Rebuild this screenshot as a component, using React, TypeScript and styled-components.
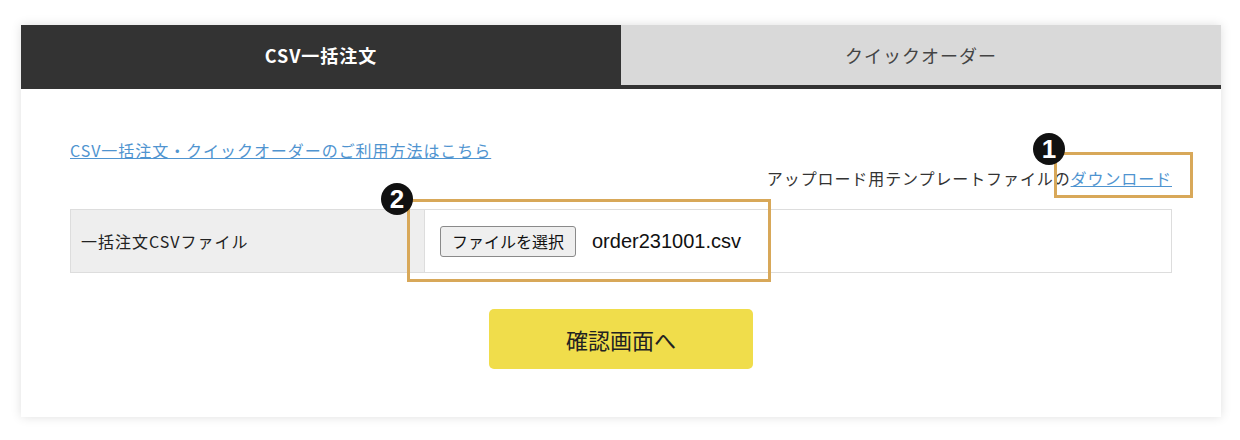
import React from "react";
import styled, { createGlobalStyle } from "styled-components";

const GlobalStyle = createGlobalStyle`
  html, body {
    margin: 0;
    padding: 0;
    background: #ffffff;
  }
  body {
    font-family: "Noto Sans CJK JP", "Noto Sans", sans-serif;
    color: #222222;
  }
`;

const App = () => {
  return (
    <>
      <GlobalStyle />
      <Page>
        <Card>
          <TabBar>
            <Tab $active>CSV一括注文</Tab>
            <Tab>クイックオーダー</Tab>
          </TabBar>
          <Body>
            <HelpLink href="#">CSV一括注文・クイックオーダーのご利用方法はこちら</HelpLink>
            <TemplateRow>
              <TemplateText>
                アップロード用テンプレートファイルの
                <InlineLink href="#">ダウンロード</InlineLink>
              </TemplateText>
              <Highlight $top={-14} $right={-21} $width={139} $height={46} />
              <Badge $top={-33} $right={107}>1</Badge>
            </TemplateRow>
            <FileTable>
              <LabelCell>一括注文CSVファイル</LabelCell>
              <ValueCell>
                <ChooseButton type="button">ファイルを選択</ChooseButton>
                <FileName>order231001.csv</FileName>
              </ValueCell>
              <Highlight $top={-11} $left={336} $width={364} $height={83} />
              <Badge $top={-27} $left={310}>2</Badge>
            </FileTable>
            <Actions>
              <ConfirmButton type="button">確認画面へ</ConfirmButton>
            </Actions>
          </Body>
        </Card>
      </Page>
    </>
  );
};

export default App;

const Page = styled.div`
  width: 1240px;
  height: 440px;
  padding: 25px 0 0 21px;
  box-sizing: border-box;
`;

const Card = styled.div`
  width: 1200px;
  background: #ffffff;
  box-shadow: 0 0 10px rgba(0, 0, 0, 0.13);
`;

const TabBar = styled.div`
  display: flex;
  border-bottom: 4px solid #333333;
`;

const Tab = styled.div<{ $active?: boolean }>`
  flex: 1;
  height: 60px;
  display: flex;
  align-items: center;
  justify-content: center;
  font-size: 18px;
  letter-spacing: 1px;
  font-weight: ${(p) => (p.$active ? 700 : 400)};
  background: ${(p) => (p.$active ? "#333333" : "#d9d9d9")};
  color: ${(p) => (p.$active ? "#ffffff" : "#444444")};
`;

const Body = styled.div`
  padding: 49px 49px 48px 49px;
  display: flex;
  flex-direction: column;
`;

const HelpLink = styled.a`
  align-self: flex-start;
  font-size: 16px;
  line-height: 24px;
  letter-spacing: 0.95px;
  color: #4f94d0;
  text-decoration: underline;
`;

const TemplateRow = styled.div`
  position: relative;
  margin-top: 4px;
  display: flex;
  justify-content: flex-end;
`;

const TemplateText = styled.span`
  font-size: 16px;
  line-height: 24px;
  letter-spacing: 0.9px;
  color: #333333;
`;

const InlineLink = styled.a`
  color: #4f94d0;
  text-decoration: underline;
`;

const Highlight = styled.div<{
  $top: number;
  $left?: number;
  $right?: number;
  $width: number;
  $height: number;
}>`
  position: absolute;
  top: ${(p) => p.$top}px;
  ${(p) => (p.$left !== undefined ? `left: ${p.$left}px;` : "")}
  ${(p) => (p.$right !== undefined ? `right: ${p.$right}px;` : "")}
  width: ${(p) => p.$width}px;
  height: ${(p) => p.$height}px;
  border: 3px solid #d8a859;
  box-sizing: border-box;
  pointer-events: none;
`;

const Badge = styled.div<{ $top: number; $left?: number; $right?: number }>`
  position: absolute;
  top: ${(p) => p.$top}px;
  ${(p) => (p.$left !== undefined ? `left: ${p.$left}px;` : "")}
  ${(p) => (p.$right !== undefined ? `right: ${p.$right}px;` : "")}
  width: 32px;
  height: 32px;
  border-radius: 50%;
  background: #111111;
  color: #ffffff;
  display: flex;
  align-items: center;
  justify-content: center;
  font-family: "Liberation Sans", Arial, sans-serif;
  font-weight: 700;
  font-size: 26px;
  line-height: 1;
`;

const FileTable = styled.div`
  position: relative;
  margin-top: 19px;
  display: flex;
  height: 64px;
  border: 1px solid #dddddd;
  box-sizing: border-box;
`;

const LabelCell = styled.div`
  width: 354px;
  flex-shrink: 0;
  background: #eeeeee;
  border-right: 1px solid #dddddd;
  display: flex;
  align-items: center;
  padding-left: 10px;
  box-sizing: border-box;
  font-size: 16px;
  letter-spacing: 1px;
  color: #222222;
`;

const ValueCell = styled.div`
  flex: 1;
  display: flex;
  align-items: center;
  padding-left: 15px;
`;

const ChooseButton = styled.button`
  height: 31px;
  width: 136px;
  padding: 0;
  background: #efefef;
  border: 1px solid #8a8a8a;
  border-radius: 3px;
  font-family: "Noto Sans CJK JP", sans-serif;
  font-size: 16px;
  color: #111111;
`;

const FileName = styled.span`
  margin-left: 16px;
  font-family: "Liberation Sans", Arial, sans-serif;
  font-size: 20px;
  color: #111111;
`;

const Actions = styled.div`
  margin-top: 36px;
  display: flex;
  justify-content: center;
`;

const ConfirmButton = styled.button`
  width: 264px;
  height: 60px;
  border: none;
  border-radius: 5px;
  background: #f0dd4b;
  font-family: "Noto Sans CJK JP", sans-serif;
  font-size: 22px;
  color: #222222;
`;
